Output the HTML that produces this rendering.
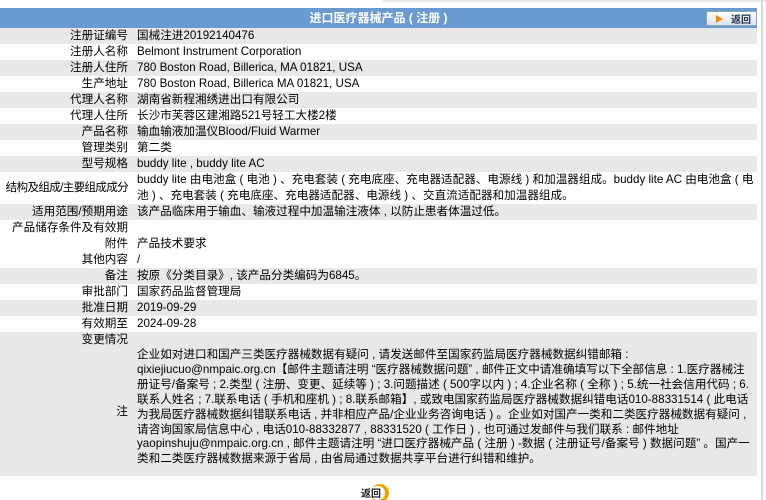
<!DOCTYPE html>
<html><head><meta charset="utf-8"><style>
body{margin:0;width:766px;height:500px;overflow:hidden;background:#fff;font-family:"Liberation Sans","Noto Sans CJK SC",sans-serif;font-size:11.6px;color:#000;position:relative}
.topbar{position:absolute;left:383px;top:0;width:383px;height:2px;background:#e8e8e8}
.vline{position:absolute;left:761px;top:0;width:2px;height:500px;background:#d8d8d8}
.hdr{position:absolute;left:0;top:8px;width:757px;height:20px;background:#6a9bd0;color:#fff;font-weight:bold;text-align:center;line-height:20px;font-size:12px}
.btn{position:absolute;left:706px;top:11px;width:51px;height:15px;border:1px solid #8aa;border-radius:2px;background:linear-gradient(#fff,#dde4ee);font-size:10px;font-weight:bold;color:#235;line-height:14px;text-align:right;padding-right:5px;box-sizing:border-box;font-family:"Noto Sans CJK SC",sans-serif}
.btn:before{content:"";position:absolute;left:9px;top:3px;border-left:7px solid #f08a10;border-top:4px solid transparent;border-bottom:4px solid transparent}
.row{position:absolute;left:0;width:757px;height:16px;line-height:16px}
.g{background:#e8e8e8}
.l{position:absolute;right:629px;white-space:nowrap;text-align:right}
.v{position:absolute;left:137px;width:618px}
.b2{position:absolute;left:360px;top:483px;width:30px;height:17px}
</style></head><body>
<div class="topbar"></div><div class="vline"></div>
<div class="hdr">进口医疗器械产品 ( 注册 )</div>
<div class="btn">返回</div>
<div class="row g" style="top:28px"><span class="l">注册证编号</span><span class="v">国械注进20192140476</span></div>
<div class="row" style="top:44px"><span class="l">注册人名称</span><span class="v">Belmont Instrument Corporation</span></div>
<div class="row g" style="top:60px"><span class="l">注册人住所</span><span class="v">780 Boston Road, Billerica, MA 01821, USA</span></div>
<div class="row" style="top:76px"><span class="l">生产地址</span><span class="v">780 Boston Road, Billerica MA 01821, USA</span></div>
<div class="row g" style="top:92px"><span class="l">代理人名称</span><span class="v">湖南省新程湘绣进出口有限公司</span></div>
<div class="row" style="top:108px"><span class="l">代理人住所</span><span class="v">长沙市芙蓉区建湘路521号轻工大楼2楼</span></div>
<div class="row g" style="top:124px"><span class="l">产品名称</span><span class="v">输血输液加温仪Blood/Fluid Warmer</span></div>
<div class="row" style="top:140px"><span class="l">管理类别</span><span class="v">第二类</span></div>
<div class="row g" style="top:156px"><span class="l">型号规格</span><span class="v">buddy lite , buddy lite AC</span></div>
<div class="row" style="top:172px;height:32px"><span class="l" style="top:8px;letter-spacing:-0.7px">结构及组成/主要组成成分</span><span class="v">buddy lite 由电池盒 ( 电池 ) 、充电套装 ( 充电底座、充电器适配器、电源线 ) 和加温器组成。buddy lite AC 由电池盒 ( 电池 ) 、充电套装 ( 充电底座、充电器适配器、电源线 ) 、交直流适配器和加温器组成。</span></div>
<div class="row g" style="top:204px"><span class="l">适用范围/预期用途</span><span class="v">该产品临床用于输血、输液过程中加温输注液体 , 以防止患者体温过低。</span></div>
<div class="row" style="top:220px"><span class="l">产品储存条件及有效期</span></div>
<div class="row" style="top:236px"><span class="l">附件</span><span class="v">产品技术要求</span></div>
<div class="row" style="top:252px"><span class="l">其他内容</span><span class="v">/</span></div>
<div class="row g" style="top:268px"><span class="l">备注</span><span class="v">按原《分类目录》, 该产品分类编码为6845。</span></div>
<div class="row" style="top:284px"><span class="l">审批部门</span><span class="v">国家药品监督管理局</span></div>
<div class="row g" style="top:300px"><span class="l">批准日期</span><span class="v">2019-09-29</span></div>
<div class="row" style="top:316px"><span class="l">有效期至</span><span class="v">2024-09-28</span></div>
<div class="row g" style="top:332px;height:144px"><span class="l">变更情况</span><span class="l" style="top:72px">注</span><div class="v" style="top:16px;line-height:14.9px">企业如对进口和国产三类医疗器械数据有疑问 , 请发送邮件至国家药监局医疗器械数据纠错邮箱 : qixiejiucuo@nmpaic.org.cn【邮件主题请注明 “医疗器械数据问题” , 邮件正文中请准确填写以下全部信息 : 1.医疗器械注册证号/备案号 ; 2.类型 ( 注册、变更、延续等 ) ; 3.问题描述 ( 500字以内 ) ; 4.企业名称 ( 全称 ) ; 5.统一社会信用代码 ; 6.联系人姓名 ; 7.联系电话 ( 手机和座机 ) ; 8.联系邮箱】, 或致电国家药监局医疗器械数据纠错电话010-88331514 ( 此电话为我局医疗器械数据纠错联系电话 , 并非相应产品/企业业务咨询电话 ) 。企业如对国产一类和二类医疗器械数据有疑问 , 请咨询国家局信息中心 , 电话010-88332877 , 88331520 ( 工作日 ) , 也可通过发邮件与我们联系 : 邮件地址 yaopinshuju@nmpaic.org.cn , 邮件主题请注明 “进口医疗器械产品 ( 注册 ) -数据 ( 注册证号/备案号 ) 数据问题” 。国产一类和二类医疗器械数据来源于省局 , 由省局通过数据共享平台进行纠错和维护。</div></div>
<svg class="b2" viewBox="0 0 30 17"><circle cx="20" cy="10" r="9" fill="#f5a000"/><circle cx="18" cy="10" r="7" fill="#fff"/><text x="1" y="14" font-size="10" font-weight="bold" fill="#222" font-family="Noto Sans CJK SC,sans-serif">返回</text></svg>
</body></html>
